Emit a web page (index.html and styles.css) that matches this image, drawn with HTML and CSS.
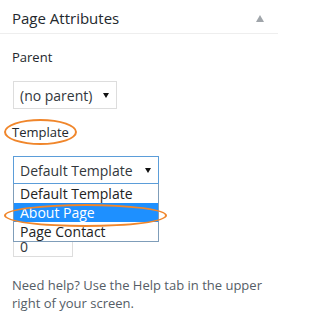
FILE: index.html
```html
<!DOCTYPE html>
<html lang="en">
<head>
<meta charset="utf-8">
<title>Page Attributes</title>
<link rel="stylesheet" href="styles.css">
</head>
<body>
<div class="postbox">
  <div class="hndle">
    <span class="hndle-title">Page Attributes</span>
    <svg class="toggle" width="8" height="7" viewBox="0 0 8 7"><polygon points="4,0 8,7 0,7" fill="#a0a5aa"/></svg>
  </div>
  <div class="inside">
    <p class="label">Parent</p>
    <div class="select select-parent">
      <span>(no parent)</span>
      <svg class="caret" width="6" height="5" viewBox="0 0 6 5"><polygon points="0,0 6,0 3,5" fill="#111"/></svg>
    </div>
    <p class="label">Template</p>
    <div class="select-wrap">
      <div class="select select-template">
        <span>Default Template</span>
        <svg class="caret" width="6" height="5" viewBox="0 0 6 5"><polygon points="0,0 6,0 3,5" fill="#111"/></svg>
      </div>
      <ul class="dropdown">
        <li>Default Template</li>
        <li class="active">About Page</li>
        <li>Page Contact</li>
      </ul>
    </div>
    <div class="input"><span class="input-value">0</span></div>
    <p class="help">Need help? Use the Help tab in the upper right of your screen.</p>
  </div>
  <span class="mark mark-template"></span>
  <span class="mark mark-about"></span>
</div>
</body>
</html>
```

FILE: styles.css
```css
html, body {
  margin: 0;
  padding: 0;
  background: #fff;
}

body {
  font-family: "Open Sans", "Liberation Sans", sans-serif;
  color: #32373c;
}

.postbox {
  position: relative;
  width: 278px;
}

.hndle {
  display: flex;
  justify-content: space-between;
  align-items: flex-start;
  height: 34px;
  box-sizing: border-box;
  padding: 8px 14px 0 12px;
  border-bottom: 1px solid #eeeeee;
}

.hndle-title {
  font-size: 15px;
  line-height: 20px;
  color: #23282d;
}

.toggle {
  margin-top: 7px;
  display: block;
}

.inside {
  padding: 0 12px;
}

.label {
  margin: 13px 0 0;
  font-size: 13px;
  line-height: 20px;
  color: #23282d;
}

.select {
  display: flex;
  justify-content: space-between;
  align-items: center;
  box-sizing: border-box;
  height: 28px;
  margin-left: 1px;
  padding: 0 7px 0 6px;
  border: 1px solid #dddddd;
  font-size: 14px;
  color: #32373c;
  background: #fff;
}

.select-parent {
  width: 104px;
  margin-top: 14px;
}

.caret {
  display: block;
}

.select-wrap {
  position: relative;
  width: 147px;
  margin-top: 14px;
}

.select-template {
  width: 146px;
  border-color: #5b9dd9;
}

.dropdown {
  position: absolute;
  top: 28px;
  left: 1px;
  z-index: 2;
  width: 146px;
  box-sizing: border-box;
  margin: 0;
  padding: 0;
  list-style: none;
  background: #fff;
  border: 1px solid #7f9db9;
  border-top: none;
}

.dropdown li {
  height: 19px;
  line-height: 19px;
  padding-left: 6px;
  font-size: 14px;
  color: #222;
  white-space: nowrap;
}

.dropdown li.active {
  background: #1e90ff;
  color: #fff;
}

.input {
  box-sizing: border-box;
  width: 60px;
  height: 28px;
  margin: 45px 0 0 1px;
  padding-left: 6px;
  border: 1px solid #dddddd;
  overflow: hidden;
}

.input-value {
  display: block;
  padding-top: 8px;
  font-size: 14px;
  line-height: 18px;
  color: #32373c;
}

.help {
  margin: 19px 0 0;
  font-size: 13px;
  line-height: 18px;
  color: #555d66;
}

.mark {
  position: absolute;
  z-index: 3;
  box-sizing: border-box;
  border: 2px solid #f0862b;
  border-radius: 50%;
}

.mark-template {
  left: 4px;
  top: 119px;
  width: 73px;
  height: 26px;
}

.mark-about {
  left: 4px;
  top: 204px;
  width: 163px;
  height: 23px;
}
```
